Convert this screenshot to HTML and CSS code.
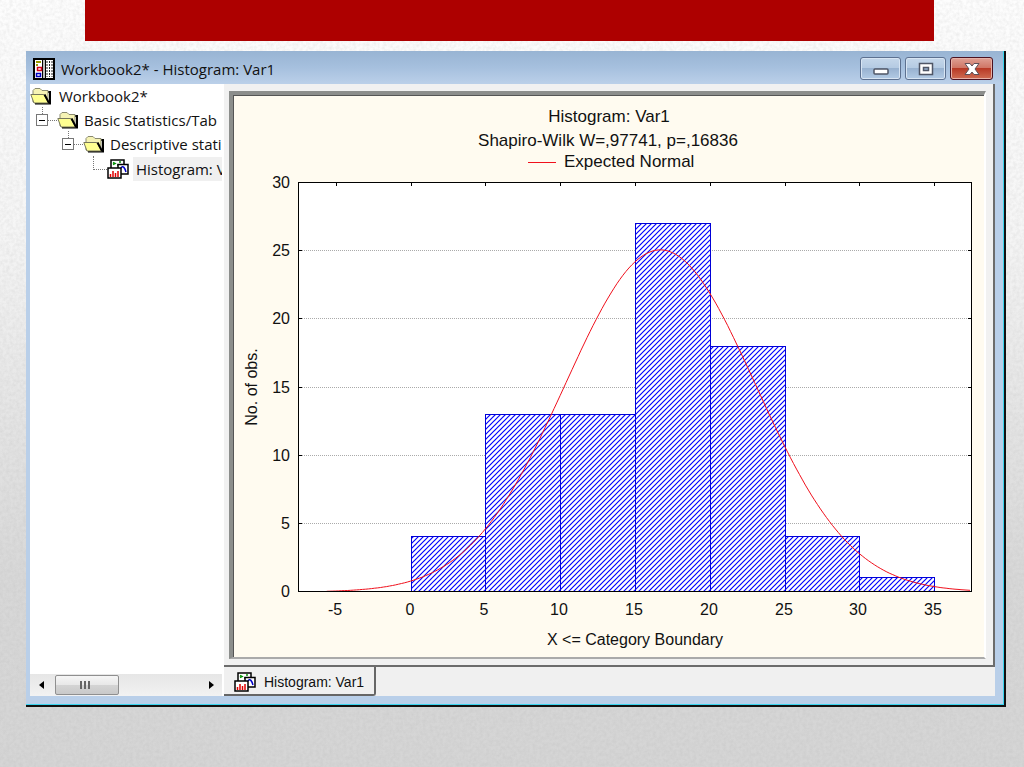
FILE: index.html
```html
<!DOCTYPE html>
<html lang="en">
<head>
    <meta charset="UTF-8">
    <meta name="viewport" content="width=device-width, initial-scale=1.0">
    <title>Workbook2* - Histogram: Var1</title>
    <link rel="stylesheet" href="styles.css">
</head>
<body>

    <svg class="paper" aria-hidden="true">
        <filter id="grain">
            <feTurbulence type="fractalNoise" baseFrequency="0.3" numOctaves="2" seed="4"/>
            <feColorMatrix values="0 0 0 0 0.4  0 0 0 0 0.4  0 0 0 0 0.4  0.3 0 0 0 -0.1"/>
        </filter>
        <rect width="100%" height="100%" filter="url(#grain)"/>
    </svg>

    <!-- shared icons -->
    <svg class="sprite" aria-hidden="true">
        <symbol id="folder" viewBox="0 0 22 18">
            <path d="M18 5h2v11.500H5" fill="none" stroke="#000" stroke-width="2"/>
            <path d="M3 15V3.500l2-2h5l2 2h6V15z" fill="#f6f3b4" stroke="#8a8a70"/>
            <path d="M.8 7.500h13l5 8.500H4z" fill="#ffff91" stroke="#77775c"/>
            <path d="M14.500 7.500l4.500 8.500" stroke="#000" stroke-width="2"/>
        </symbol>
        <symbol id="graph" viewBox="0 0 22 20">
            <path d="M4 1h13v10H4z" fill="#fff" stroke="#000" stroke-width="1.5"/>
            <path d="M6 3.500l2 1-2 1M10 6h2M12 3h2" fill="none" stroke="#079307" stroke-width="1.5"/>
            <path d="M11 5.500h10V15H11z" fill="#fff" stroke="#000" stroke-width="1.5"/>
            <path d="M14 9c2-3 4 0 5 4" fill="none" stroke="#0000c8" stroke-width="1.5"/>
            <path d="M1 9h13v10H1z" fill="#fff" stroke="#000" stroke-width="1.5"/>
            <path d="M3.500 18v-3M6 18v-6M8.500 18v-4M11 18v-6" stroke="#e00000" stroke-width="1.5"/>
        </symbol>
    </svg>

    <div class="banner"></div>

    <main class="window">
        <header class="titlebar">
            <svg class="app-icon" viewBox="0 0 22 22">
                <path d="M1 1h9v20H1zM12 1h9v20h-9z" fill="#fff" stroke="#000" stroke-width="2"/>
                <path d="M10 2h2v18h-2z" fill="#bbb"/>
                <path d="M3 4h5M3 7h2" stroke="#9a9a00" stroke-width="2"/>
                <path d="M4.500 9.500h4v3h-4z" fill="none" stroke="#d00018" stroke-width="1.500"/>
                <path d="M3.500 15.500h4v3h-4z" fill="none" stroke="#0000c0" stroke-width="1.500"/>
                <path d="M14 3v16M16.500 3v16M19 3v16" stroke="#222" stroke-dasharray="2 1"/>
            </svg>
            <h1>Workbook2* - Histogram: Var1</h1>
            <div class="controls">
                <button aria-label="Minimize"><svg viewBox="0 0 20 16"><rect x="3" y="8" width="14" height="5" rx="1" fill="#fff" stroke="#4f5666" stroke-width="1.500"/></svg></button>
                <button aria-label="Maximize"><svg viewBox="0 0 20 16"><path d="M3.500 2.500h13v11h-13zM7.500 6.500h5v3h-5z" fill="#fff" fill-rule="evenodd" stroke="#4f5666" stroke-width="1.500"/></svg></button>
                <button class="close" aria-label="Close"><svg viewBox="0 0 20 16"><path d="M3 2.500h5l2 2.500 2-2.500h5L13 8l4 5.500h-5L10 11l-2 2.500H3L7 8z" fill="#fff" stroke="#5d5058"/></svg></button>
            </div>
        </header>

        <div class="content">
            <nav class="sidebar">
                <ul class="tree">
                    <li><svg class="icon"><use href="#folder"/></svg><span>Workbook2*</span></li>
                    <li class="level1"><i class="toggle"></i><svg class="icon"><use href="#folder"/></svg><span>Basic Statistics/Tab</span></li>
                    <li class="level2"><i class="toggle"></i><svg class="icon"><use href="#folder"/></svg><span>Descriptive stati</span></li>
                    <li class="level3"><i class="branch"></i><svg class="icon"><use href="#graph"/></svg><span class="selected">Histogram: Var1</span></li>
                </ul>
                <div class="scrollbar">
                    <button aria-label="Scroll left"><svg viewBox="0 0 6 8"><path d="M5 0v8L0 4z"/></svg></button>
                    <div class="thumb"></div>
                    <button aria-label="Scroll right"><svg viewBox="0 0 6 8"><path d="M1 0v8l5-4z"/></svg></button>
                </div>
            </nav>

            <section class="pane">
                <div class="frame">
                    <div class="sunken">
                        <svg id="chart" viewBox="0 0 750 561" role="img" aria-label="Histogram of Var1">
                            <defs>
                                <pattern id="hatch" width="5" height="5" patternUnits="userSpaceOnUse">
                                    <rect class="blank" width="5" height="5"/>
                                    <path class="stripe" d="M-1 6 6-1M-1 1 1-1M4 6 6 4"/>
                                </pattern>
                            </defs>
                            <text class="heading" x="375" y="26">Histogram: Var1</text>
                            <text class="heading" x="374" y="50">Shapiro-Wilk W=,97741, p=,16836</text>
                            <path class="curve" d="M294 66.500h28"/>
                            <text class="heading legend" x="330" y="71">Expected Normal</text>
                            <rect class="blank" x="64" y="87" width="674" height="409"/>
                            <g id="plot"></g>
                            <text class="label" x="401" y="549">X &lt;= Category Boundary</text>
                            <text class="label" transform="translate(23 291) rotate(-90)">No. of obs.</text>
                        </svg>
                    </div>
                </div>
                <div class="tabs">
                    <button class="tab"><svg class="icon"><use href="#graph"/></svg>Histogram: Var1</button>
                </div>
            </section>
        </div>
    </main>

    <script src="chart.js"></script>
</body>
</html>
```
FILE: styles.css
```css
* { box-sizing: border-box; }
body { margin: 0; min-height: 100vh; background: linear-gradient(#fdfdfd, #f5f5f5 30%, #e4e4e4 55%, #d8d8d8 75%, #d5d5d5); font-family: "Open Sans", "Noto Sans", sans-serif; font-size: 15px; color: #111; }
button { font: inherit; color: inherit; padding: 0; border: none; background: none; }
.paper { position: fixed; inset: 0; z-index: -1; width: 100%; height: 100%; }
.sprite { position: absolute; width: 0; height: 0; }
.icon { width: 22px; height: 20px; flex: none; }

.banner { height: 41px; margin: 0 90px 0 85px; background: #ad0000; }

.window { margin: 10px 18px 0 26px; padding: 0 9px 9px 4px; background: #b9cfe9; border-right: 2px solid #111; border-bottom: 2px solid #111; box-shadow: inset -1px -1px #39d4ee; }
.titlebar { display: flex; align-items: center; gap: 6px; height: 33px; margin: 0 -8px 0 -4px; padding: 2px 10px 0 7px; background: linear-gradient(#98b4d3, #a6c0de 50%, #bbd0e9); }
.app-icon { width: 22px; height: 22px; }
h1 { flex: 1; margin: 0; font-size: 15px; font-weight: normal; line-height: 20px; }
.controls { display: flex; gap: 4px; }
.controls button { display: flex; align-items: center; justify-content: center; width: 41px; height: 23px; border: 1px solid #5d7190; border-radius: 3px; background: linear-gradient(#c5d7ea, #b4cae2 48%, #98b2d0 50%, #b3cbe5); box-shadow: inset 0 0 0 1px #d8e5f3; }
.controls .close { width: 43px; border-color: #4c1220; background: linear-gradient(#dfa094, #cf7564 48%, #b83a26 50%, #cf6d53); box-shadow: inset 0 0 0 1px #e7b1a7; }
.controls svg { width: 20px; height: 16px; }

.content { display: flex; background: #f0f0f0; }
.sidebar { display: flex; flex-direction: column; flex: none; width: 194px; padding-right: 2px; background: #fff; }
.tree { flex: 1; margin: 0; padding: 0; list-style: none; overflow: hidden; }
.tree li { display: flex; align-items: center; height: 24px; white-space: nowrap; line-height: 24px; }
.tree span { margin-left: 4px; padding: 0 3px; }
.tree .selected { background: #f0f0f0; }
.tree .level1 { padding-left: 6px; }
.tree .level2 { padding-left: 32px; }
.tree .level3 { padding-left: 63px; height: 26px; }
.level1 span, .level2 span { margin-left: 2px; }
.toggle { position: relative; flex: none; width: 12px; height: 12px; margin-right: 9px; border: 1px solid #777; background: linear-gradient(#000, #000) center / 6px 1px no-repeat; }
.toggle::before { content: ""; position: absolute; left: 5px; bottom: 11px; height: 7px; border-left: 1px dotted #777; }
.toggle::after { content: ""; position: absolute; left: 11px; top: 5px; width: 9px; border-top: 1px dotted #777; }
.branch { flex: none; align-self: flex-start; width: 14px; height: 14px; border-left: 1px dotted #777; border-bottom: 1px dotted #777; }

.scrollbar { display: flex; align-items: center; height: 22px; background: linear-gradient(#e6e6e6, #f2f2f2); }
.scrollbar button { display: flex; align-items: center; justify-content: center; width: 23px; height: 20px; }
.scrollbar button:last-child { margin-left: auto; }
.scrollbar svg { width: 6px; height: 8px; }
.thumb { width: 64px; height: 20px; margin-left: 2px; border: 1px solid #8f8f8f; border-radius: 2px; background: repeating-linear-gradient(90deg, #666 0 2px, transparent 2px 4px) 24px center / 11px 8px no-repeat, linear-gradient(#f6f6f6, #e8e8e8 48%, #d4d4d4 50%, #c9c9c9); }

.pane { flex: 1; min-width: 0; }
.frame { padding: 7px 7px 6px 5px; border-right: 2px solid #6c6c6c; border-bottom: 2px solid #6c6c6c; background: #f1f1f1; }
.sunken { padding: 1px 0 0 1px; border: 2px solid #aaa; border-top: 4px solid #8c8e8c; border-left: 4px solid #8c8e8c; border-right-color: #fff; background: #fffbf0; box-shadow: inset 1px 1px #555; }
#chart { display: block; width: 100%; height: auto; font-family: "Liberation Sans", Arial, sans-serif; fill: #111; }
.heading { font-size: 17px; text-anchor: middle; }
.legend { text-anchor: start; }
.label { font-size: 16px; text-anchor: middle; }
.curve { fill: none; stroke: #f0101c; }
.blank { fill: #fff; }
.stripe { fill: none; stroke: #0000ff; stroke-width: 1.2; }
.bar { fill: url(#hatch); stroke: #0000d8; shape-rendering: crispEdges; }
.axis { fill: none; stroke: #000; shape-rendering: crispEdges; }
.grid { stroke: #aaa; stroke-dasharray: 1 1; }
.value { font-size: 16px; text-anchor: end; }

.tabs { display: flex; height: 29px; }
.tab { display: flex; align-items: center; gap: 8px; width: 152px; padding: 3px 0 0 10px; border-right: 2px solid #666; border-bottom: 2px solid #666; border-radius: 0 0 3px 0; background: #f0f0f0; font-family: "Liberation Sans", Arial, sans-serif; font-size: 14px; white-space: nowrap; }
```
FILE: chart.js
```js
const counts = [4, 13, 13, 27, 18, 4, 1];
const mean = 16.7, sd = 6.36, peak = 25.1;
const plot = document.getElementById("plot");

// data units to drawing units
const px = x => 176.5 + x * 14.96;
const py = y => 496 - y * 13.63;
const snapX = v => Math.round(v) + 0.5;
const snapY = v => Math.round(v) - 0.5;

let svg = "";
for (let y = 5; y < 30; y += 5) {
    svg += `<path class="grid" d="M64 ${snapY(py(y))}H738"/>`;
}
counts.forEach((n, i) => {
    const left = snapX(px(i * 5)), right = snapX(px(i * 5 + 5)), top = snapY(py(n));
    svg += `<path class="bar" d="M${left} 496V${top}H${right}V496"/>`;
});

let curve = "";
for (let x = -5.6; x <= 37.5; x += 0.2) {
    const y = peak * Math.exp(-((x - mean) ** 2) / (2 * sd * sd));
    curve += `${curve ? "L" : "M"}${px(x).toFixed(1)} ${py(y).toFixed(1)}`;
}
svg += `<path class="curve" d="${curve}"/>`;

svg += `<path class="axis" d="M64.5 86.5H737.5V495.5H64.5Z"/>`;
for (let y = 0; y <= 30; y += 5) {
    svg += `<path class="axis" d="M64 ${snapY(py(y))}h4M738 ${snapY(py(y))}h-4"/>`;
    svg += `<text class="value" x="56" y="${Math.round(py(y)) + 5}">${y}</text>`;
}
for (let x = -5; x <= 35; x += 5) {
    svg += `<path class="axis" d="M${snapX(px(x))} 86v4"/>`;
    svg += `<text class="label" x="${Math.round(px(x)) - 1}" y="519">${x}</text>`;
}
plot.innerHTML = svg;
```
